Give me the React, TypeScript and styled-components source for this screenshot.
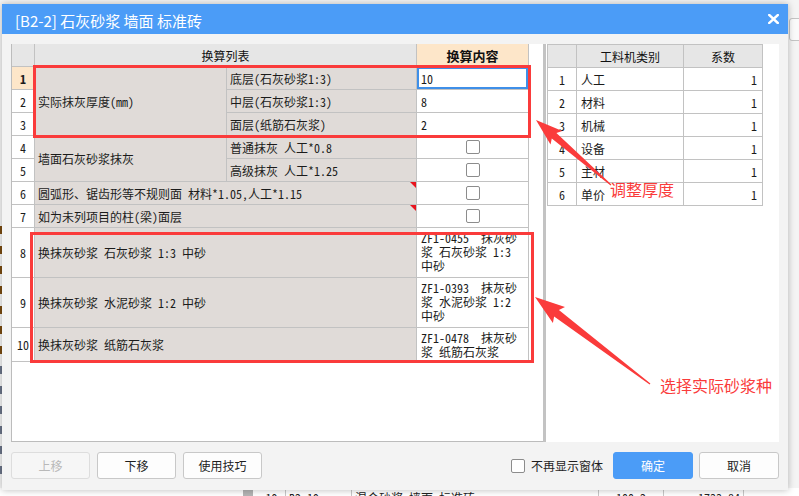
import React from "react";
import styled, { createGlobalStyle, css } from "styled-components";

const TABLE_FONT = `"Noto Sans Mono CJK SC", "Noto Sans CJK SC", "Liberation Mono", monospace`;
const UI_FONT = `"Noto Sans CJK SC", "Noto Sans", sans-serif`;
const RED = "#fa3b3b";

const GlobalStyle = createGlobalStyle`
  html, body { margin: 0; padding: 0; }
  body {
    width: 799px;
    height: 496px;
    overflow: hidden;
    background: #f1f1f1;
    font-family: ${UI_FONT};
  }
  * { box-sizing: border-box; }
`;

const Page = styled.div`
  position: relative;
  width: 799px;
  height: 496px;
  overflow: hidden;
  background: #f4f4f4;
  padding: 4px 0 0 2px;
`;

/* ---------- background application peeking around the dialog ---------- */
const BackRow = styled.div`
  position: absolute;
  left: 0;
  top: 488px;
  width: 799px;
  height: 22px;
  display: flex;
  align-items: flex-start;
  padding-left: 243px;
  background: #ffffff;
  font: 12px ${TABLE_FONT};
  color: #222;
`;

const BackSquare = styled.div`
  width: 10px;
  height: 10px;
  margin-top: 2px;
  margin-right: 5px;
  background: #b4b4b4;
`;

const BackCell = styled.div<{ $w: number; $align?: string }>`
  width: ${(p) => p.$w}px;
  padding: 1px 3px 0;
  text-align: ${(p) => p.$align ?? "left"};
  border-right: 1px solid #c8c8c8;
  height: 100%;
  white-space: nowrap;
`;

const BackSide = styled.div`
  position: absolute;
  left: 0;
  top: 226px;
  display: flex;
  flex-direction: column;
  gap: 12px;
`;

const BackSideMark = styled.div<{ $c: string }>`
  width: 2px;
  height: 8px;
  background: ${(p) => p.$c};
`;

const BackTopRight = styled.div`
  position: absolute;
  right: -6px;
  top: 18px;
  width: 16px;
  height: 23px;
  border: 1px solid #c4c4c4;
  border-radius: 3px;
  background: #fafafa;
`;

/* ---------- dialog ---------- */
const Dialog = styled.div`
  position: relative;
  z-index: 1;
  width: 786px;
  height: 486px;
  background: #f3f3f3;
  box-shadow: 0 0 7px rgba(0, 0, 0, 0.28);
  display: flex;
  flex-direction: column;
`;

const TitleBar = styled.div`
  height: 30px;
  flex: none;
  background: #4b9cf7;
  color: #ffffff;
  display: flex;
  align-items: center;
  justify-content: space-between;
  padding: 2px 9px 0 13px;
  font: 15px ${UI_FONT};
`;

const TitleText = styled.div`
  letter-spacing: 0;
`;

const CloseBtn = styled.div`
  width: 11px;
  height: 10px;
  display: flex;
  margin-bottom: 2px;
`;

const Body = styled.div`
  flex: none;
  padding: 10px 9px 0 9px;
`;

const Panels = styled.div`
  height: 398px;
  display: flex;
`;

const LeftPanel = styled.div`
  width: 532px;
  height: 100%;
  background: #ffffff;
  border-left: 1px solid #bcbcbc;
  border-bottom: 1px solid #bcbcbc;
`;

const Splitter = styled.div`
  width: 3px;
  height: 100%;
  background: #c3c3c3;
`;

const RightPanel = styled.div`
  width: 233px;
  height: 100%;
  background: #ffffff;
`;

const Grid = styled.div<{ $cols: string; $rows: string; $pad: string }>`
  display: grid;
  grid-template-columns: ${(p) => p.$cols};
  grid-template-rows: ${(p) => p.$rows};
  gap: 1px;
  padding: ${(p) => p.$pad};
  background: #c2c2c2;
  width: fit-content;
  font: 12px ${TABLE_FONT};
  color: #1b1b1b;
`;

const cellBase = css<{ $c: string; $r: string }>`
  grid-column: ${(p) => p.$c};
  grid-row: ${(p) => p.$r};
  display: flex;
  align-items: center;
  white-space: nowrap;
  overflow: hidden;
  position: relative;
`;

const HeadCell = styled.div<{ $c: string; $r: string; $hot?: boolean }>`
  ${cellBase};
  justify-content: center;
  background: ${(p) => (p.$hot ? "#fde6c9" : "#e6e6e6")};
  font-family: ${UI_FONT};
  font-size: ${(p) => (p.$hot ? "13px" : "12px")};
  font-weight: ${(p) => (p.$hot ? 700 : 400)};
  color: #111;
`;

const NumCell = styled.div<{ $c: string; $r: string; $active?: boolean }>`
  ${cellBase};
  justify-content: center;
  background: ${(p) => (p.$active ? "#fde6c9" : "#ffffff")};
  font-weight: ${(p) => (p.$active ? 700 : 400)};
`;

const LabelCell = styled.div<{ $c: string; $r: string; $marker?: boolean }>`
  ${cellBase};
  background: #e0dbd8;
  padding: 0 3px;
  ${(p) =>
    p.$marker &&
    css`
      &::after {
        content: "";
        position: absolute;
        top: 0;
        right: 0;
        border-top: 6px solid #e8141e;
        border-left: 6px solid transparent;
      }
    `}
`;

const ValueCell = styled.div<{ $c: string; $r: string; $focus?: boolean }>`
  ${cellBase};
  background: #ffffff;
  padding: 0 4px;
  box-shadow: ${(p) => (p.$focus ? "inset 0 0 0 2px #3f8fe8" : "none")};
`;

const NumberCell = styled.div<{ $c: string; $r: string }>`
  ${cellBase};
  background: #ffffff;
  justify-content: flex-end;
  padding: 0 5px;
`;

const CheckCell = styled.div<{ $c: string; $r: string }>`
  ${cellBase};
  background: #ffffff;
  justify-content: center;
`;

const CheckBox = styled.span<{ $size: number }>`
  display: inline-block;
  width: ${(p) => p.$size}px;
  height: ${(p) => p.$size}px;
  border: 1px solid #8c8c8c;
  border-radius: 2px;
  background: #ffffff;
  flex: none;
`;

const WrapCell = styled.div<{ $c: string; $r: string }>`
  grid-column: ${(p) => p.$c};
  grid-row: ${(p) => p.$r};
  background: #ffffff;
  padding: 3px 3px 0 4px;
  line-height: 14px;
  white-space: pre;
  overflow: hidden;
`;

const RightTable = styled.div`
  margin-left: 1px;
`;

/* ---------- footer ---------- */
const Footer = styled.div`
  flex: none;
  height: 48px;
  display: flex;
  align-items: flex-start;
  justify-content: space-between;
  padding: 10px 9px 0 9px;
`;

const BtnGroup = styled.div<{ $gap: number }>`
  display: flex;
  align-items: center;
  gap: ${(p) => p.$gap}px;
`;

const Button = styled.button<{ $variant?: "primary" | "disabled" }>`
  width: ${(p) => (p.$variant === "primary" ? 80 : 79)}px;
  height: 27px;
  border-radius: 3px;
  font: 12px ${UI_FONT};
  padding: 0;
  cursor: default;
  ${(p) =>
    p.$variant === "primary"
      ? css`
          background: #4b9cf7;
          border: 1px solid #4b9cf7;
          color: #ffffff;
        `
      : p.$variant === "disabled"
      ? css`
          background: #f6f6f6;
          border: 1px solid #dddddd;
          color: #b9b9b9;
        `
      : css`
          background: #fdfdfd;
          border: 1px solid #c8c8c8;
          color: #1e1e1e;
        `}
`;

const WideButton = styled(Button)`
  width: 80px;
`;

const CheckLabel = styled.label`
  display: flex;
  align-items: center;
  gap: 6px;
  font: 12px ${UI_FONT};
  color: #1e1e1e;
  margin-right: 4px;
`;

/* ---------- annotations ---------- */
const Overlay = styled.svg`
  position: absolute;
  left: 0;
  top: 0;
  width: 799px;
  height: 496px;
  z-index: 2;
  pointer-events: none;
`;

const Note = styled.span<{ $x: number; $y: number }>`
  position: absolute;
  z-index: 3;
  left: ${(p) => p.$x}px;
  top: ${(p) => p.$y}px;
  font: 16px ${UI_FONT};
  line-height: 16px;
  color: ${RED};
  white-space: nowrap;
`;

const arrow = (
  tx: number,
  ty: number,
  sx: number,
  sy: number,
  hl: number,
  hw: number,
  sw: number,
  tw: number
) => {
  const dx = tx - sx;
  const dy = ty - sy;
  const len = Math.hypot(dx, dy);
  const ux = dx / len;
  const uy = dy / len;
  const nx = -uy;
  const ny = ux;
  const bx = tx - ux * hl;
  const by = ty - uy * hl;
  const wx = bx - ux * 3;
  const wy = by - uy * 3;
  const pts = [
    [sx + nx * tw, sy + ny * tw],
    [bx + nx * sw, by + ny * sw],
    [wx + nx * hw, wy + ny * hw],
    [tx, ty],
    [wx - nx * hw, wy - ny * hw],
    [bx - nx * sw, by - ny * sw],
    [sx - nx * tw, sy - ny * tw],
  ];
  return pts.map((p) => p.map((v) => v.toFixed(1)).join(",")).join(" ");
};

const rightRows = [
  ["1", "人工"],
  ["2", "材料"],
  ["3", "机械"],
  ["4", "设备"],
  ["5", "主材"],
  ["6", "单价"],
];

const sideMarks = [
  "#7a4a10", "#7a4a10", "#7a4a10", "#7a4a10", "#7a4a10", "#7a4a10", "#7a4a10",
  "#6b7488", "#6b7488", "#6b7488", "#6b7488", "#6b7488", "#6b7488",
];

export default function App() {
  return (
    <>
      <GlobalStyle />
      <Page>
        <BackSide>
          {sideMarks.map((c, i) => (
            <BackSideMark key={i} $c={c} />
          ))}
        </BackSide>
        <BackTopRight />
        <BackRow>
          <BackSquare />
          <BackCell $w={28} $align="center">19</BackCell>
          <BackCell $w={66}>B2-19</BackCell>
          <BackCell $w={247}>混合砂浆 墙面 标准砖</BackCell>
          <BackCell $w={65} $align="center">100m2</BackCell>
          <BackCell $w={80} $align="right">1733.84</BackCell>
        </BackRow>

        <Dialog>
          <TitleBar>
            <TitleText>[B2-2] 石灰砂浆 墙面 标准砖</TitleText>
            <CloseBtn>
              <svg width="11" height="10" viewBox="0 0 11 10">
                <path d="M1.2 1 L9.8 9 M9.8 1 L1.2 9" stroke="#ffffff" strokeWidth="2.4" strokeLinecap="square" fill="none" />
              </svg>
            </CloseBtn>
          </TitleBar>

          <Body>
            <Panels>
              <LeftPanel>
                <Grid
                  $cols="22px 191px 189px 111px"
                  $rows="22px repeat(7, 22px) 49px 49px 33px"
                  $pad="0 1px 1px 0"
                >
                  <HeadCell $c="1" $r="1" />
                  <HeadCell $c="2 / 4" $r="1">换算列表</HeadCell>
                  <HeadCell $c="4" $r="1" $hot>换算内容</HeadCell>

                  <NumCell $c="1" $r="2" $active>1</NumCell>
                  <NumCell $c="1" $r="3">2</NumCell>
                  <NumCell $c="1" $r="4">3</NumCell>
                  <LabelCell $c="2" $r="2 / 5">实际抹灰厚度(mm)</LabelCell>
                  <LabelCell $c="3" $r="2">底层(石灰砂浆1:3)</LabelCell>
                  <LabelCell $c="3" $r="3">中层(石灰砂浆1:3)</LabelCell>
                  <LabelCell $c="3" $r="4">面层(纸筋石灰浆)</LabelCell>
                  <ValueCell $c="4" $r="2" $focus>10</ValueCell>
                  <ValueCell $c="4" $r="3">8</ValueCell>
                  <ValueCell $c="4" $r="4">2</ValueCell>

                  <NumCell $c="1" $r="5">4</NumCell>
                  <NumCell $c="1" $r="6">5</NumCell>
                  <LabelCell $c="2" $r="5 / 7">墙面石灰砂浆抹灰</LabelCell>
                  <LabelCell $c="3" $r="5">普通抹灰 人工*0.8</LabelCell>
                  <LabelCell $c="3" $r="6">高级抹灰 人工*1.25</LabelCell>
                  <CheckCell $c="4" $r="5"><CheckBox $size={14} /></CheckCell>
                  <CheckCell $c="4" $r="6"><CheckBox $size={14} /></CheckCell>

                  <NumCell $c="1" $r="7">6</NumCell>
                  <LabelCell $c="2 / 4" $r="7" $marker>圆弧形、锯齿形等不规则面 材料*1.05,人工*1.15</LabelCell>
                  <CheckCell $c="4" $r="7"><CheckBox $size={14} /></CheckCell>

                  <NumCell $c="1" $r="8">7</NumCell>
                  <LabelCell $c="2 / 4" $r="8" $marker>如为未列项目的柱(梁)面层</LabelCell>
                  <CheckCell $c="4" $r="8"><CheckBox $size={14} /></CheckCell>

                  <NumCell $c="1" $r="9">8</NumCell>
                  <LabelCell $c="2 / 4" $r="9">换抹灰砂浆 石灰砂浆 1:3 中砂</LabelCell>
                  <WrapCell $c="4" $r="9">{"ZF1-0455  抹灰砂\n浆 石灰砂浆 1:3\n中砂"}</WrapCell>

                  <NumCell $c="1" $r="10">9</NumCell>
                  <LabelCell $c="2 / 4" $r="10">换抹灰砂浆 水泥砂浆 1:2 中砂</LabelCell>
                  <WrapCell $c="4" $r="10">{"ZF1-0393  抹灰砂\n浆 水泥砂浆 1:2\n中砂"}</WrapCell>

                  <NumCell $c="1" $r="11">10</NumCell>
                  <LabelCell $c="2 / 4" $r="11">换抹灰砂浆 纸筋石灰浆</LabelCell>
                  <WrapCell $c="4" $r="11">{"ZF1-0478  抹灰砂\n浆 纸筋石灰浆"}</WrapCell>
                </Grid>
              </LeftPanel>
              <Splitter />
              <RightPanel>
                <RightTable>
                  <Grid $cols="28px 106px 78px" $rows="repeat(7, 22px)" $pad="1px">
                    <HeadCell $c="1" $r="1" />
                    <HeadCell $c="2" $r="1">工料机类别</HeadCell>
                    <HeadCell $c="3" $r="1">系数</HeadCell>
                    {rightRows.map(([n, name], i) => (
                      <React.Fragment key={n}>
                        <NumCell $c="1" $r={String(i + 2)}>{n}</NumCell>
                        <ValueCell $c="2" $r={String(i + 2)}>{name}</ValueCell>
                        <NumberCell $c="3" $r={String(i + 2)}>1</NumberCell>
                      </React.Fragment>
                    ))}
                  </Grid>
                </RightTable>
              </RightPanel>
            </Panels>
          </Body>

          <Footer>
            <BtnGroup $gap={7}>
              <Button $variant="disabled">上移</Button>
              <Button>下移</Button>
              <Button>使用技巧</Button>
            </BtnGroup>
            <BtnGroup $gap={6}>
              <CheckLabel>
                <CheckBox $size={14} />
                不再显示窗体
              </CheckLabel>
              <WideButton $variant="primary">确定</WideButton>
              <WideButton>取消</WideButton>
            </BtnGroup>
          </Footer>
        </Dialog>

        <Overlay viewBox="0 0 799 496">
          <rect x="34.5" y="66.5" width="495" height="70" fill="none" stroke={RED} strokeWidth="3" />
          <rect x="31.5" y="233.5" width="501" height="128" fill="none" stroke={RED} strokeWidth="3" />
          <polygon points={arrow(536, 120, 611, 185, 24, 9, 3.5, 0.6)} fill={RED} />
          <polygon points={arrow(535, 297, 650, 384, 27, 10, 4, 0.6)} fill={RED} />
        </Overlay>
        <Note $x={610} $y={181}>调整厚度</Note>
        <Note $x={660} $y={377}>选择实际砂浆种</Note>
      </Page>
    </>
  );
}
